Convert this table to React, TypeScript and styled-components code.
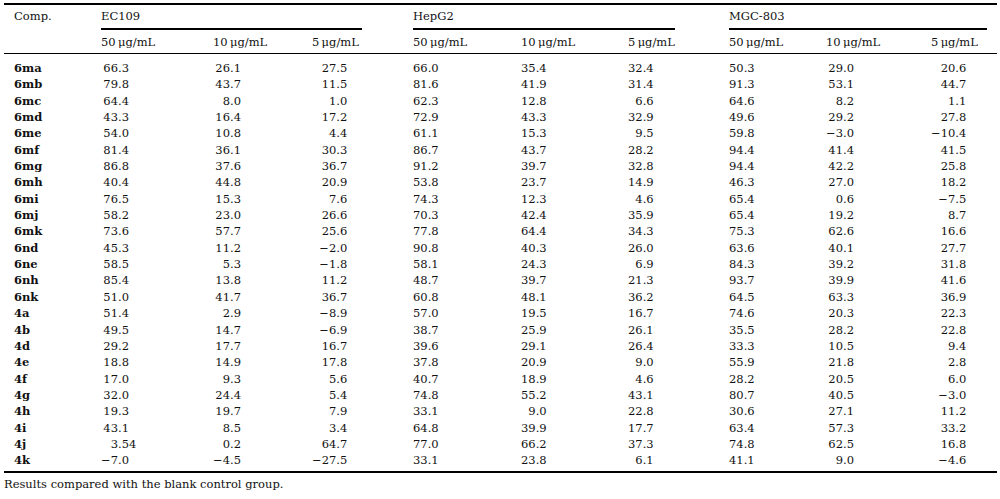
import * as React from "react";
import styled, { createGlobalStyle } from "styled-components";

const GlobalStyle = createGlobalStyle`
  body {
    margin: 0;
    background: #fff;
  }
`;

const MINUS = "\u2212";

const Page = styled.section`
  padding: 3px 0 0 4px;
  width: 993px;
  font-family: "DejaVu Serif", "Liberation Serif", serif;
  font-size: 11.5px;
  color: #111;
`;

const Table = styled.table`
  width: 993px;
  table-layout: fixed;
  border-collapse: separate;
  border-spacing: 0;

  tbody tr:first-child td {
    padding-top: 6px;
  }

  tbody tr:last-child td {
    padding-bottom: 2px;
    border-bottom: 2px solid #000;
  }
`;

const Col = styled.col<{ $w: number }>`
  width: ${(p) => p.$w}px;
`;

const CompHead = styled.th`
  font-weight: normal;
  text-align: left;
  vertical-align: top;
  line-height: 15px;
  padding: 3.5px 0 0 10px;
  border-top: 2px solid #000;
`;

const GroupHead = styled.th<{ $lead: number; $trail: number }>`
  font-weight: normal;
  text-align: left;
  vertical-align: top;
  padding: 0 ${(p) => p.$trail}px 0 ${(p) => p.$lead}px;
  border-top: 2px solid #000;
`;

const GroupTitle = styled.div`
  line-height: 15px;
  padding: 3.5px 0 4.5px;
  border-bottom: 2px solid #000;
`;

const SubHead = styled.th<{ $lead?: number }>`
  font-weight: normal;
  text-align: left;
  white-space: nowrap;
  line-height: 15px;
  padding: 4.5px 0 3.5px ${(p) => p.$lead ?? 0}px;
  border-bottom: 1px solid #000;
`;

const LabelCell = styled.td`
  font-weight: bold;
  line-height: 16.35px;
  padding: 0 0 0 10px;
  white-space: nowrap;
`;

const ValueCell = styled.td<{ $lead?: number }>`
  line-height: 16.35px;
  padding: 0 0 0 ${(p) => p.$lead ?? 0}px;
  white-space: nowrap;
`;

const Int = styled.span<{ $w: number }>`
  display: inline-block;
  width: ${(p) => p.$w}ch;
  text-align: right;
`;

const Footnote = styled.p`
  margin: 4px 0 0;
  line-height: 15px;
`;

const widths = [97, 112, 99, 50, 159, 107, 47, 151, 105, 66];
const leads = [0, 0, 0, 51, 0, 0, 54, 0, 0];

const groups = [
  { name: "EC109", lead: 0, trail: 0 },
  { name: "HepG2", lead: 51, trail: 0 },
  { name: "MGC-803", lead: 54, trail: 10 },
];

const doses = ["50\u2009\u03bcg/mL", "10\u2009\u03bcg/mL", "5\u2009\u03bcg/mL"];

const m = (v: string) => v.replace("-", MINUS);

const rows: string[][] = [
  ["6ma", "66.3", "26.1", "27.5", "66.0", "35.4", "32.4", "50.3", "29.0", "20.6"],
  ["6mb", "79.8", "43.7", "11.5", "81.6", "41.9", "31.4", "91.3", "53.1", "44.7"],
  ["6mc", "64.4", "8.0", "1.0", "62.3", "12.8", "6.6", "64.6", "8.2", "1.1"],
  ["6md", "43.3", "16.4", "17.2", "72.9", "43.3", "32.9", "49.6", "29.2", "27.8"],
  ["6me", "54.0", "10.8", "4.4", "61.1", "15.3", "9.5", "59.8", "-3.0", "-10.4"],
  ["6mf", "81.4", "36.1", "30.3", "86.7", "43.7", "28.2", "94.4", "41.4", "41.5"],
  ["6mg", "86.8", "37.6", "36.7", "91.2", "39.7", "32.8", "94.4", "42.2", "25.8"],
  ["6mh", "40.4", "44.8", "20.9", "53.8", "23.7", "14.9", "46.3", "27.0", "18.2"],
  ["6mi", "76.5", "15.3", "7.6", "74.3", "12.3", "4.6", "65.4", "0.6", "-7.5"],
  ["6mj", "58.2", "23.0", "26.6", "70.3", "42.4", "35.9", "65.4", "19.2", "8.7"],
  ["6mk", "73.6", "57.7", "25.6", "77.8", "64.4", "34.3", "75.3", "62.6", "16.6"],
  ["6nd", "45.3", "11.2", "-2.0", "90.8", "40.3", "26.0", "63.6", "40.1", "27.7"],
  ["6ne", "58.5", "5.3", "-1.8", "58.1", "24.3", "6.9", "84.3", "39.2", "31.8"],
  ["6nh", "85.4", "13.8", "11.2", "48.7", "39.7", "21.3", "93.7", "39.9", "41.6"],
  ["6nk", "51.0", "41.7", "36.7", "60.8", "48.1", "36.2", "64.5", "63.3", "36.9"],
  ["4a", "51.4", "2.9", "-8.9", "57.0", "19.5", "16.7", "74.6", "20.3", "22.3"],
  ["4b", "49.5", "14.7", "-6.9", "38.7", "25.9", "26.1", "35.5", "28.2", "22.8"],
  ["4d", "29.2", "17.7", "16.7", "39.6", "29.1", "26.4", "33.3", "10.5", "9.4"],
  ["4e", "18.8", "14.9", "17.8", "37.8", "20.9", "9.0", "55.9", "21.8", "2.8"],
  ["4f", "17.0", "9.3", "5.6", "40.7", "18.9", "4.6", "28.2", "20.5", "6.0"],
  ["4g", "32.0", "24.4", "5.4", "74.8", "55.2", "43.1", "80.7", "40.5", "-3.0"],
  ["4h", "19.3", "19.7", "7.9", "33.1", "9.0", "22.8", "30.6", "27.1", "11.2"],
  ["4i", "43.1", "8.5", "3.4", "64.8", "39.9", "17.7", "63.4", "57.3", "33.2"],
  ["4j", "3.54", "0.2", "64.7", "77.0", "66.2", "37.3", "74.8", "62.5", "16.8"],
  ["4k", "-7.0", "-4.5", "-27.5", "33.1", "23.8", "6.1", "41.1", "9.0", "-4.6"],
];

// width of the integer part in ch: digits, plus a wider minus sign
const intWidth = (v: string) => {
  const [int] = v.split(".");
  const neg = int.startsWith("-");
  return int.replace("-", "").length + (neg ? 1.32 : 0);
};

const decimals = leads.map((_, c) =>
  Math.max(...rows.map((r) => intWidth(r[c + 1])))
);

const Num: React.FC<{ value: string; w: number }> = ({ value, w }) => {
  const [int, frac] = value.split(".");
  return (
    <>
      <Int $w={w}>{m(int)}</Int>.{frac}
    </>
  );
};

export default function App() {
  return (
    <Page>
      <GlobalStyle />
      <Table>
        <colgroup>
          {widths.map((w, i) => (
            <Col key={i} $w={w} />
          ))}
        </colgroup>
        <thead>
          <tr>
            <CompHead>Comp.</CompHead>
            {groups.map((g) => (
              <GroupHead key={g.name} colSpan={3} $lead={g.lead} $trail={g.trail}>
                <GroupTitle>{g.name}</GroupTitle>
              </GroupHead>
            ))}
          </tr>
          <tr>
            <SubHead />
            {leads.map((lead, i) => (
              <SubHead key={i} $lead={lead}>
                {doses[i % 3]}
              </SubHead>
            ))}
          </tr>
        </thead>
        <tbody>
          {rows.map((r) => (
            <tr key={r[0]}>
              <LabelCell>{r[0]}</LabelCell>
              {leads.map((lead, i) => (
                <ValueCell key={i} $lead={lead}>
                  <Num value={r[i + 1]} w={decimals[i]} />
                </ValueCell>
              ))}
            </tr>
          ))}
        </tbody>
      </Table>
      <Footnote>Results compared with the blank control group.</Footnote>
    </Page>
  );
}
